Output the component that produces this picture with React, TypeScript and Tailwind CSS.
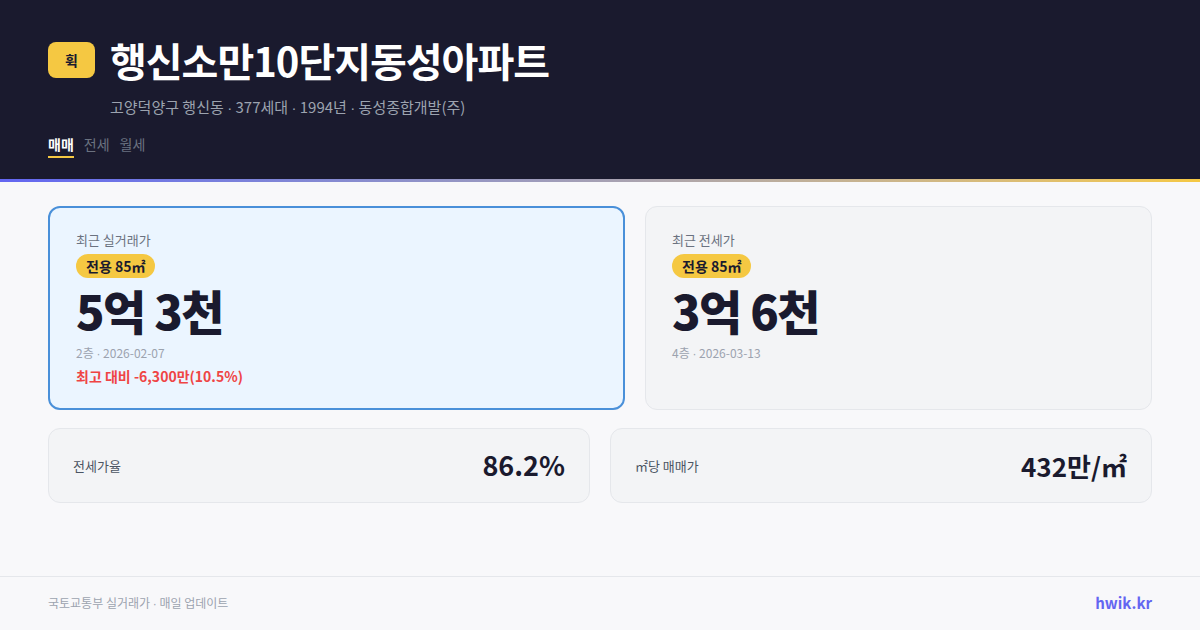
const Dot = () => <span style={{ fontFamily: '"Liberation Sans", sans-serif' }}>·</span>

export default function App() {
  const font = { fontFamily: '"Noto Sans CJK KR", "Noto Sans", sans-serif' }
  return (
    <div className="w-[1200px] h-[630px] bg-[#f8f8fa] flex flex-col overflow-hidden" style={font}>
      <header className="bg-[#1a1a2e] h-[179px] px-12 pt-[36px]">
        <div className="flex items-center gap-[15px]">
          <div className="w-[47px] h-[36px] rounded-lg bg-[#f5c842] flex items-center justify-center text-[14px] font-bold text-[#1a1a2e]">
            휙
          </div>
          <h1 className="text-[40px] leading-[48px] font-bold text-white tracking-[-1px]">행신소만10단지동성아파트</h1>
        </div>
        <p className="mt-[13px] ml-[62px] text-[15px] leading-[20px] text-[#9ca3af]">
          고양덕양구 행신동 <Dot /> 377세대 <Dot /> 1994년 <Dot /> 동성종합개발(주)
        </p>
        <nav className="mt-[16px] flex gap-[10px] text-[14px] leading-[20px]">
          <span className="font-bold text-white border-b-2 border-[#f5c842] pb-[2px]">매매</span>
          <span className="text-[#6b7280]">전세</span>
          <span className="text-[#6b7280]">월세</span>
        </nav>
      </header>
      <div className="h-[3px] bg-gradient-to-r from-[#6366f1] to-[#f5c842]" />

      <main className="flex-1 px-12 pt-[24px]">
        <div className="grid grid-cols-[577fr_507fr] gap-5">
          <div className="h-[204px] rounded-xl border-2 border-[#4a90d9] bg-[#ebf5ff] px-[26px] pt-[23px]">
            <div className="text-[13px] leading-[18px] text-[#6b7280]">최근 실거래가</div>
            <span className="mt-[5px] inline-block rounded-full bg-[#f5c842] px-[10px] text-[14px] leading-[24px] font-bold text-[#1a1a2e]">
              전용 85㎡
            </span>
            <div className="mt-[2px] text-[47px] leading-[60px] font-extrabold text-[#1a1a2e] tracking-[-1.5px]">5억 3천</div>
            <div className="mt-[4px] text-[12px] leading-[18px] text-[#9ca3af]">2층 <Dot /> 2026-02-07</div>
            <div className="mt-[3px] text-[14px] leading-[20px] font-semibold text-[#ef4444]">최고 대비 -6,300만(10.5%)</div>
          </div>
          <div className="h-[204px] rounded-xl border border-[#e5e7eb] bg-[#f3f4f6] px-[26px] pt-[24px]">
            <div className="text-[13px] leading-[18px] text-[#6b7280]">최근 전세가</div>
            <span className="mt-[5px] inline-block rounded-full bg-[#f5c842] px-[10px] text-[14px] leading-[24px] font-bold text-[#1a1a2e]">
              전용 85㎡
            </span>
            <div className="mt-[2px] text-[47px] leading-[60px] font-extrabold text-[#1a1a2e] tracking-[-1.5px]">3억 6천</div>
            <div className="mt-[4px] text-[12px] leading-[18px] text-[#9ca3af]">4층 <Dot /> 2026-03-13</div>
          </div>
        </div>

        <div className="mt-[18px] grid grid-cols-2 gap-5">
          <div className="h-[75px] rounded-xl border border-[#e5e7eb] bg-[#f3f4f6] px-6 flex items-center justify-between">
            <span className="text-[13px] text-[#4b5563]">전세가율</span>
            <span className="text-[27px] font-bold text-[#1a1a2e]">86.2%</span>
          </div>
          <div className="h-[75px] rounded-xl border border-[#e5e7eb] bg-[#f3f4f6] px-6 flex items-center justify-between">
            <span className="text-[13px] text-[#4b5563]">㎡당 매매가</span>
            <span className="text-[26px] font-bold text-[#1a1a2e]">432만/㎡</span>
          </div>
        </div>
      </main>

      <footer className="h-[54px] border-t border-[#e5e7eb] px-12 flex items-center justify-between">
        <span className="text-[12px] text-[#9ca3af]">국토교통부 실거래가 <Dot /> 매일 업데이트</span>
        <span className="text-[15px] font-bold text-[#6366f1]">hwik.kr</span>
      </footer>
    </div>
  )
}
